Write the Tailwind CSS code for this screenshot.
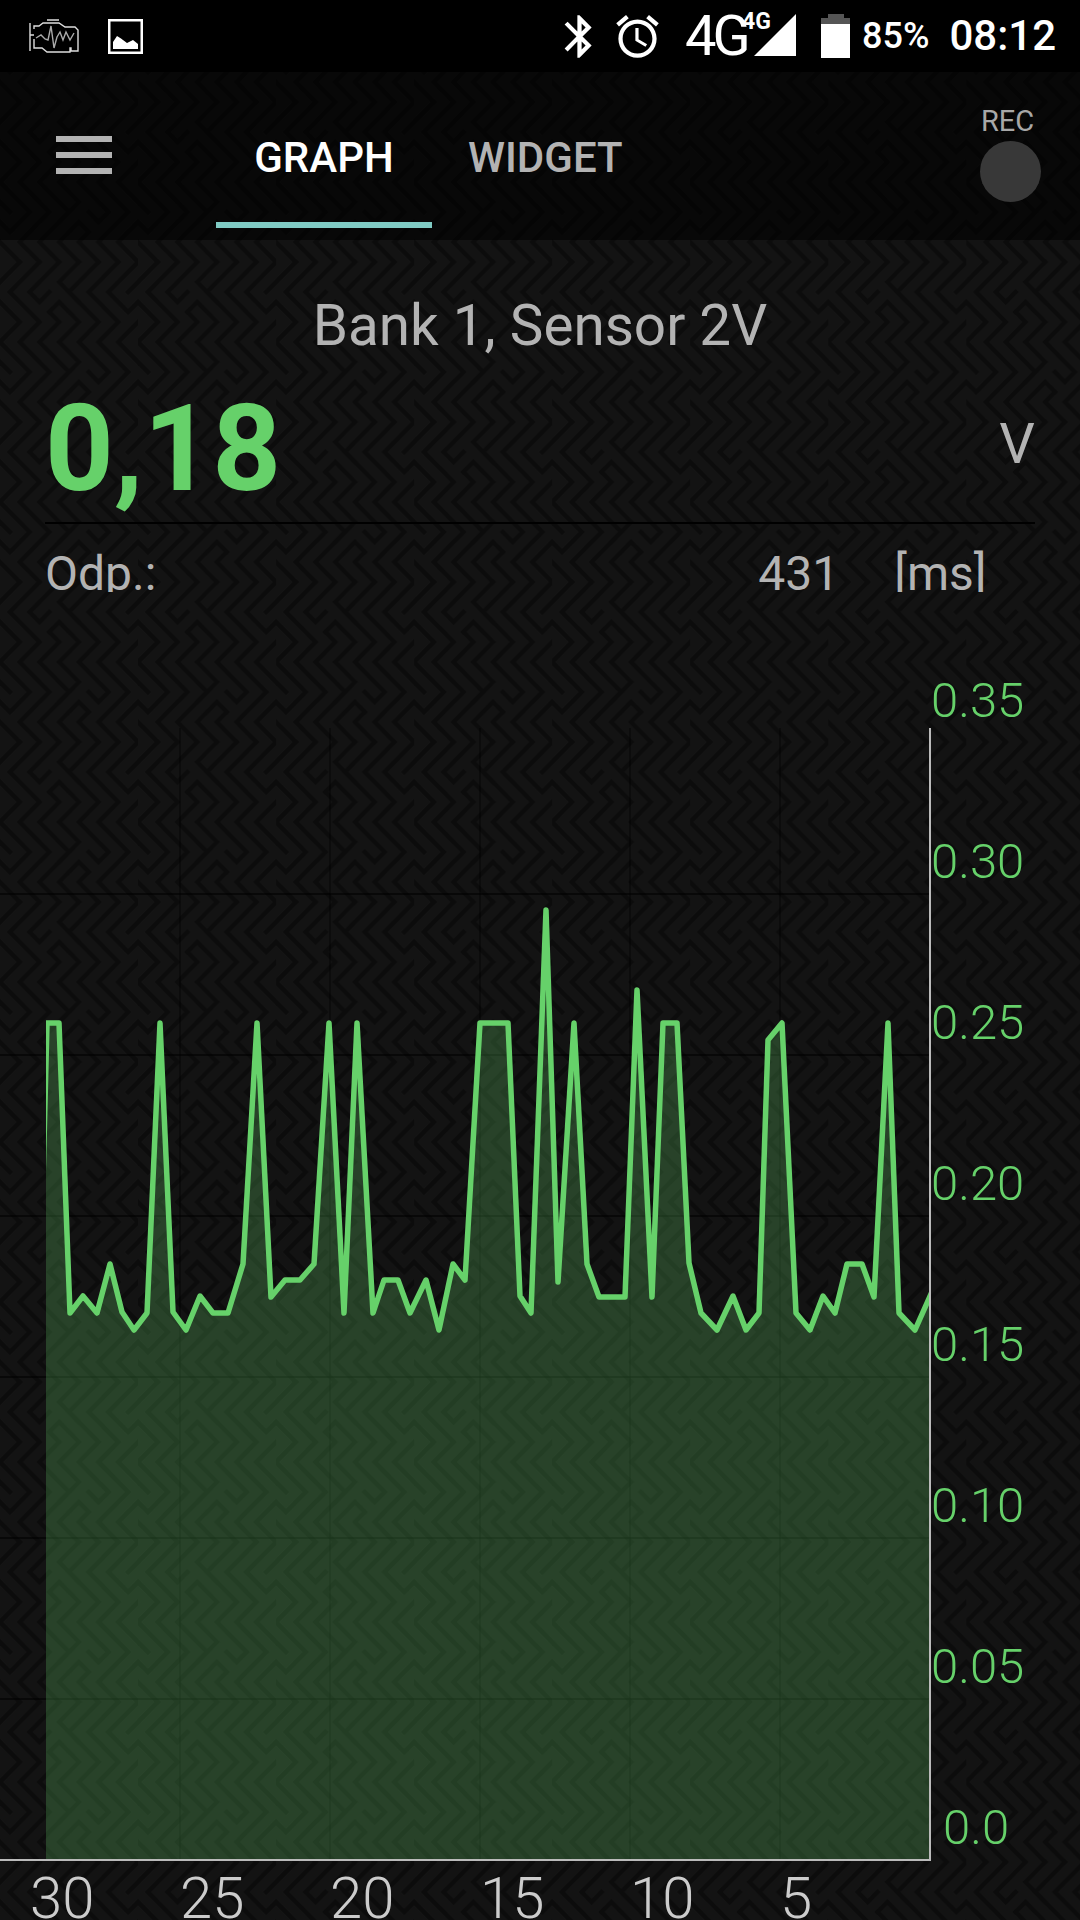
<!DOCTYPE html>
<html lang="en">
<head>
  <meta charset="UTF-8" />
  <meta name="viewport" content="width=device-width, initial-scale=1.0"/>
  <title>Graph</title>
  <script src="https://cdn.jsdelivr.net/npm/@tailwindcss/browser@4"></script>
</head>
<body class="bg-black">
<div class="relative isolate w-[1080px] h-[1920px] overflow-hidden flex flex-col bg-[#131313] font-['Roboto',sans-serif]">

  <!-- Maze background -->
  <svg class="absolute inset-0 -z-10" width="1080" height="1920" xmlns="http://www.w3.org/2000/svg">
    <defs>
      <g id="mazeCell" fill="none" stroke="#0c0c0c" stroke-width="4.5" stroke-linecap="square">
        <path d="M0 0L30 30L10 50L0 40" />
        <path d="M20 0L50 30L20 60L40 80" />
        <path d="M40 0L70 30L40 60L60 80" />
        <path d="M60 0L80 20L60 40" />
        <path d="M0 60L20 80" />
        <path d="M90 50L80 40L60 60L80 80" />
        <path d="M90 50L80 60L100 80" />
        <path d="M80 0L110 30L100 40L90 30" />
        <path d="M100 0L130 30L100 60L120 80" />
        <path d="M120 0L140 20" />
        <path d="M0 20L10 30" />
        <path d="M140 40L120 60L140 80" />
      </g>
      <pattern id="maze" x="0" y="22" width="140" height="160" patternUnits="userSpaceOnUse" patternTransform="scale(0.986 1)">
        <use href="#mazeCell" />
        <use href="#mazeCell" transform="translate(140 80) scale(-1 1)" />
      </pattern>
    </defs>
    <rect width="1080" height="1920" fill="url(#maze)" />
  </svg>

  <!-- Status bar -->
  <div class="h-[72px] shrink-0 bg-black flex items-center text-white">
    <svg class="ml-[29px]" width="50" height="36" viewBox="0 0 50 36" fill="none" xmlns="http://www.w3.org/2000/svg">
      <path d="M1 5V33M1 17H5M5 11V8H10L14 5H30L36 9H46L49 12V33H42V30H41V34H18L13 30H5V21M18 2H30" stroke="#ddd" stroke-width="1.4" />
      <path d="M7 20L12 17L16 21L19 22L22 8L25 30L28 19L31 14L34 22L37 14L41 22L45 15" stroke="#aaa" stroke-width="1.4" />
    </svg>
    <svg class="ml-[29px]" width="35" height="35" viewBox="0 0 35 35" fill="none" xmlns="http://www.w3.org/2000/svg">
      <rect x="1.25" y="1.25" width="32.5" height="32.5" stroke="#fff" stroke-width="2.5" />
      <path d="M5 30V23L9 17L13 19.500L19 24L25 21L30 25V30Z" fill="#fff" />
    </svg>

    <svg class="ml-[411px]" width="51" height="51" viewBox="0 0 24 24" fill="#fff" xmlns="http://www.w3.org/2000/svg">
      <path d="M17.71 7.71L12 2h-1v7.59L6.41 5 5 6.41 10.59 12 5 17.59 6.41 19 11 14.41V22h1l5.71-5.71-4.3-4.29 4.3-4.29zM13 5.830l1.88 1.88L13 9.59V5.83zm1.88 10.46L13 18.17v-3.76l1.88 1.88z" />
    </svg>
    <svg class="ml-[7px]" width="51" height="51" viewBox="0 0 24 24" fill="#fff" xmlns="http://www.w3.org/2000/svg">
      <path d="M22 5.72l-4.6-3.86-1.29 1.53 4.6 3.86L22 5.72zM7.88 3.39L6.6 1.86 2 5.71l1.29 1.53 4.59-3.85zM12.5 8H11v6l4.75 2.85.75-1.23-4-2.37V8zM12 4c-4.97 0-9 4.03-9 9s4.03 9 9 9 9-4.03 9-9-4.03-9-9-9zm0 16c-3.87 0-7-3.13-7-7s3.13-7 7-7 7 3.13 7 7-3.13 7-7 7z" />
    </svg>

    <div class="relative ml-[22px] w-[111px] h-[72px]">
      <span class="block text-[56px] leading-[72px] font-normal tracking-[-4px]">4G</span>
      <span class="absolute left-[57px] top-[11px] text-[23px] leading-[21px] font-bold">4G</span>
      <svg class="absolute left-[69px] top-[14px]" width="42" height="42" viewBox="0 0 42 42" xmlns="http://www.w3.org/2000/svg">
        <path d="M42 0V42H0Z" fill="#fff" />
      </svg>
    </div>

    <div class="ml-[25px] w-[29px] h-[44px] flex flex-col items-center">
      <div class="w-[16px] h-[4px] bg-[#555]"></div>
      <div class="w-[29px] h-[6px] bg-[#555]"></div>
      <div class="w-[29px] h-[34px] bg-white"></div>
    </div>

    <span class="ml-[12px] text-[36px] font-medium leading-none">85%</span>
    <span class="ml-[20px] text-[42px] font-medium leading-none">08:12</span>
  </div>

  <!-- Toolbar -->
  <div class="h-[168px] shrink-0 bg-black/55 flex items-start">
    <div class="ml-[56px] mt-[64px] flex flex-col gap-[10px]">
      <div class="w-[56px] h-[6px] bg-[#b3b3b3]"></div>
      <div class="w-[56px] h-[6px] bg-[#b3b3b3]"></div>
      <div class="w-[56px] h-[6px] bg-[#b3b3b3]"></div>
    </div>
    <div class="ml-[104px] w-[216px] h-[156px] border-b-[6px] border-[#80cbc4] flex justify-center pt-[62px] text-[42px] leading-[48px] font-medium text-white">GRAPH</div>
    <div class="ml-[36px] h-[156px] pt-[62px] text-[42px] leading-[48px] font-medium text-[#b3b3b3]">WIDGET</div>
    <div class="ml-auto mr-[39px] w-[61px] flex flex-col items-center pt-[32px]">
      <span class="pr-[6px] text-[29px] leading-[34px] text-[#a8a8a8]">REC</span>
      <div class="mt-[3px] w-[61px] h-[61px] rounded-full bg-[#383838]"></div>
    </div>
  </div>

  <!-- Sensor readout -->
  <div class="text-center text-[56.6px] leading-[64px] text-[#b3b3b3] pt-[54px]">Bank 1, Sensor 2V</div>
  <div class="mx-[45px] h-[166px] border-b-2 border-black flex justify-between items-start">
    <span class="mt-[21px] text-[120px] leading-[140px] font-bold text-[#66d16a]">0,18</span>
    <span class="mt-[54px] text-[56px] leading-[64px] text-[#b3b3b3]">V</span>
  </div>
  <div class="ml-[45px] h-[68px] overflow-hidden flex text-[48px] leading-[68px] text-[#b3b3b3] pt-[16px]">
    <span>Odp.:</span>
    <span class="ml-[602px]">431</span>
    <span class="ml-[55px]">[ms]</span>
  </div>

  <!-- Chart -->
  <svg class="mt-[8px]" width="1080" height="1320" viewBox="0 600 1080 1320" xmlns="http://www.w3.org/2000/svg">
    <defs>
      <clipPath id="plot"><rect x="46" y="700" width="884" height="1160" /></clipPath>
    </defs>
    <g stroke="#000" stroke-width="2" stroke-opacity="0.55">
      <path d="M0 894H930M0 1055H930M0 1216H930M0 1377H930M0 1538H930M0 1699H930" />
      <path stroke-opacity="0.35" d="M180 728V1860M330 728V1860M480 728V1860M630 728V1860M780 728V1860" />
    </g>
    <g clip-path="url(#plot)">
      <path fill="#66d16a" fill-opacity="0.25" d="M40 1300L47 1023L59 1023L70 1313L83 1296L97 1313L110 1264L122 1312L134 1330L147 1313L160 1023L173 1312L186 1330L200 1296L213 1313L228 1313L243 1264L257 1023L271 1297L285 1280L300 1280L314 1264L329 1023L344 1313L357 1023L373 1313L384 1280L398 1280L410 1313L426 1280L439 1330L453 1264L465 1280L480 1023L508 1023L520 1296L531 1313L546 910L558 1282L574 1023L587 1264L599 1297L625 1297L637 990L652 1297L663 1023L677 1023L689 1263L701 1313L717 1330L733 1296L746 1330L759 1313L768 1040L782 1023L796 1313L810 1330L823 1296L835 1313L847 1264L862 1264L874 1297L888 1023L899 1313L915 1330L935 1285L935 1860L40 1860Z" />
      <path fill="none" stroke="#66d16a" stroke-width="5.5" stroke-linejoin="round" d="M40 1300L47 1023L59 1023L70 1313L83 1296L97 1313L110 1264L122 1312L134 1330L147 1313L160 1023L173 1312L186 1330L200 1296L213 1313L228 1313L243 1264L257 1023L271 1297L285 1280L300 1280L314 1264L329 1023L344 1313L357 1023L373 1313L384 1280L398 1280L410 1313L426 1280L439 1330L453 1264L465 1280L480 1023L508 1023L520 1296L531 1313L546 910L558 1282L574 1023L587 1264L599 1297L625 1297L637 990L652 1297L663 1023L677 1023L689 1263L701 1313L717 1330L733 1296L746 1330L759 1313L768 1040L782 1023L796 1313L810 1330L823 1296L835 1313L847 1264L862 1264L874 1297L888 1023L899 1313L915 1330L935 1285" />
    </g>
    <path d="M930 728V1860H0" fill="none" stroke="#bbb" stroke-width="2" />
    <g class="fill-[#66d16a] text-[49px] font-light">
      <text x="931" y="717">0.35</text>
      <text x="931" y="878">0.30</text>
      <text x="931" y="1039">0.25</text>
      <text x="931" y="1200">0.20</text>
      <text x="931" y="1361">0.15</text>
      <text x="931" y="1522">0.10</text>
      <text x="931" y="1683">0.05</text>
      <text x="943" y="1844">0.0</text>
    </g>
    <g class="fill-[#cccccc] text-[58px] font-light">
      <text x="30" y="1918">30</text>
      <text x="180" y="1918">25</text>
      <text x="330" y="1918">20</text>
      <text x="480" y="1918">15</text>
      <text x="630" y="1918">10</text>
      <text x="780" y="1918">5</text>
    </g>
  </svg>
</div>
</body>
</html>
